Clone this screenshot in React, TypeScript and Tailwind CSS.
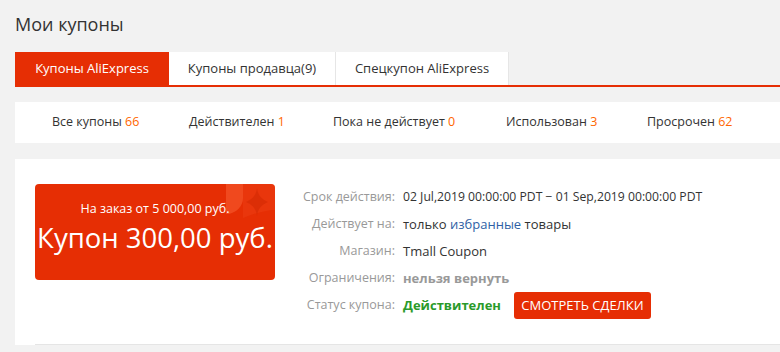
const stats = [
  { label: 'Все купоны', count: 66, w: 'w-[137px]' },
  { label: 'Действителен', count: 1, w: 'w-[144px]' },
  { label: 'Пока не действует', count: 0, w: 'w-[173px]' },
  { label: 'Использован', count: 3, w: 'w-[141px]' },
  { label: 'Просрочен', count: 62, w: '' },
]

function CouponBadge() {
  return (
    <div className="relative w-[240px] h-[96px] shrink-0 rounded-[4px] bg-[#e62e04] overflow-hidden text-white flex flex-col items-center pt-[17px]">
      {/* decor in the corner */}
      <svg className="absolute left-0 top-0" width="240" height="40" viewBox="0 0 240 40">
        <path d="M191 0 H208 V14 C208 22 202 28 194 30 L191 30 Z" fill="#f4552a" opacity="0.7" />
        <path d="M208 0 H240 V26 C230 26 218 30 208 34 Z" fill="#ee4418" opacity="0.4" />
        <path d="M222 4 C223 11 226 15 233 18 C226 21 223 25 222 32 C221 25 218 21 211 18 C218 15 221 11 222 4 Z" fill="#d42a04" opacity="0.6" />
      </svg>
      <div className="relative text-[12.5px] leading-[16px]">На заказ от 5 000,00 руб.</div>
      <div className="relative mt-[4px] text-[27.5px] leading-[34px] whitespace-nowrap">Купон 300,00 руб.</div>
    </div>
  )
}

function Row({ label, children }: { label: string; children: React.ReactNode }) {
  return (
    <div className="flex items-center h-[27px]">
      <div className="w-[100px] text-right text-[#999] text-[12.5px]">{label}</div>
      <div className="ml-[8px] flex items-center text-[#333]">{children}</div>
    </div>
  )
}

export default function App() {
  return (
    <div className="min-h-screen bg-[#f2f2f2] pl-[15px] pt-[10px] font-['Open_Sans',sans-serif] overflow-hidden">
      <h1 className="text-[18px] leading-[28px] text-[#333]">Мои купоны</h1>

      {/* Tabs */}
      <div className="mt-[14px] flex border-b-2 border-[#e62e04] text-[13px]">
        <div className="w-[154px] h-[33px] flex items-center justify-center bg-[#e62e04] text-white">Купоны AliExpress</div>
        <div className="w-[167px] h-[33px] flex items-center justify-center bg-white text-[#333] border-r border-[#e6e6e6]">Купоны продавца(9)</div>
        <div className="w-[173px] h-[33px] flex items-center justify-center bg-white text-[#333] border-r border-[#e6e6e6]">Спецкупон AliExpress</div>
      </div>

      {/* Filter bar */}
      <div className="mt-[15px] h-[41px] bg-white flex items-center pl-[37px] text-[12.5px] text-[#333]">
        {stats.map(s => (
          <div key={s.label} className={`${s.w} whitespace-nowrap`}>
            {s.label} <span className="text-[#f60]">{s.count}</span>
          </div>
        ))}
      </div>

      {/* Coupon card */}
      <div className="mt-[16px] bg-white pl-[20px] pt-[25px]">
        <div className="flex pb-[25px] border-b border-[#e5e5e5] text-[13px]">
          <CouponBadge />
          <div className="ml-[20px]">
            <Row label="Срок действия:">
              <span className="text-[12.2px]">02 Jul,2019 00:00:00 PDT − 01 Sep,2019 00:00:00 PDT</span>
            </Row>
            <Row label="Действует на:">
              только&nbsp;<span className="text-[#2f5fa5]">избранные</span>&nbsp;товары
            </Row>
            <Row label="Магазин:">Tmall Coupon</Row>
            <Row label="Ограничения:">
              <span className="font-bold text-[#999]">нельзя вернуть</span>
            </Row>
            <Row label="Статус купона:">
              <span className="font-bold text-[#2a9a2a]">Действителен</span>
              <button className="ml-[13px] w-[137px] h-[27px] rounded-[3px] bg-[#e62e04] text-white text-[13px]">СМОТРЕТЬ СДЕЛКИ</button>
            </Row>
          </div>
        </div>
      </div>
    </div>
  )
}
